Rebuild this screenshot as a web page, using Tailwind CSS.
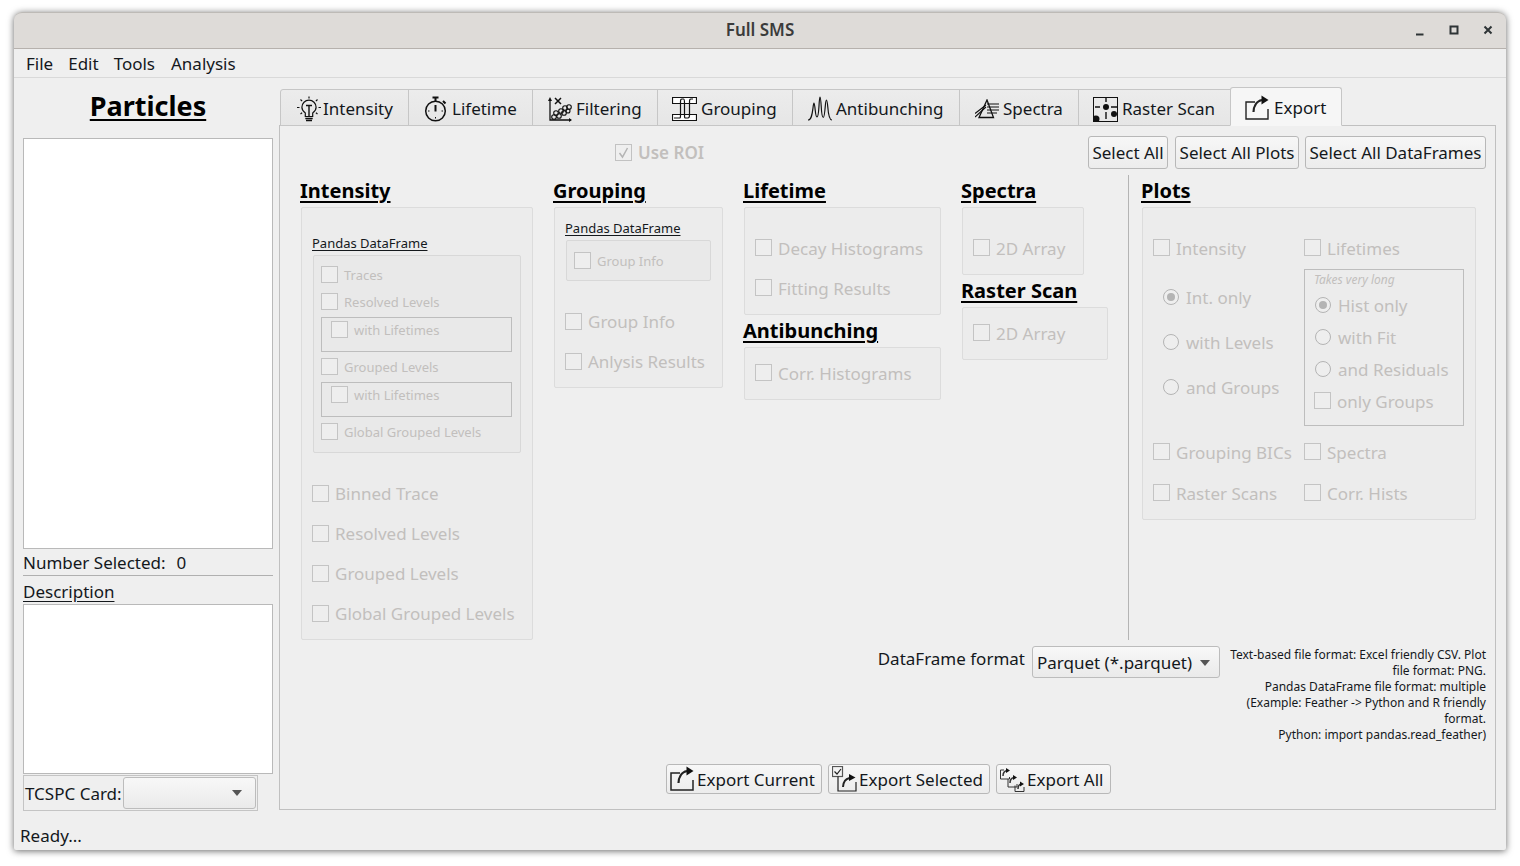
<!DOCTYPE html>
<html lang="en">
<head>
  <meta charset="UTF-8"/>
  <title>Full SMS</title>
  <script src="https://cdn.jsdelivr.net/npm/@tailwindcss/browser@4"></script>
</head>
<body class="w-[1520px] h-[866px] overflow-hidden bg-white pl-[14px] pt-[12px] font-['Noto_Sans',sans-serif] text-[17px] text-[#14181c]">

<div class="w-[1492px] h-[838px] flex flex-col bg-[#efefef] rounded-t-[8px] rounded-b-[2px] shadow-[0_1px_7px_rgba(0,0,0,0.6)]">

  <!-- title bar -->
  <div class="h-[37px] shrink-0 relative flex items-center justify-center rounded-t-[8px] border-b border-[#b6b1ad] bg-[#dedbd8] border-t border-t-[#bdbab6]">
    <span class="text-[17px] font-semibold text-[#3b3b3b] pb-[2px]">Full SMS</span>
    <div class="absolute right-[12px] top-[11px] flex gap-[22px]">
      <svg width="12" height="12" viewBox="0 0 12 12"><path d="M2 10.500h7.500" stroke="#2e3436" stroke-width="2"/></svg>
      <svg width="12" height="12" viewBox="0 0 12 12"><rect x="2.500" y="2.500" width="7" height="7" fill="none" stroke="#2e3436" stroke-width="2"/></svg>
      <svg width="12" height="12" viewBox="0 0 12 12"><path d="M2.500 2.500l7 7M9.500 2.500l-7 7" stroke="#2e3436" stroke-width="2"/></svg>
    </div>
  </div>

  <!-- menu bar -->
  <div class="h-[29px] shrink-0 flex items-center pl-[12px] pt-[2px] gap-[15px] border-b border-[#d9d9d9]">
    <span>File</span><span>Edit</span><span>Tools</span><span class="ml-[1px]">Analysis</span>
  </div>

  <!-- main area -->
  <div class="flex-1 flex pl-[9px] pr-[10px]">

    <!-- particles column -->
    <div class="w-[250px] shrink-0 flex flex-col">
      <div class="h-[60px] flex items-center justify-center pb-[4px] text-[27px] font-bold text-black underline underline-offset-[3px]">Particles</div>
      <div class="h-[411px] bg-white border border-[#b9b9b9]"></div>
      <div class="h-[27px] flex items-center pt-[2px] border-b border-[#b0b0b0] whitespace-pre"><span>Number Selected:</span><span class="ml-[11px]">0</span></div>
      <div class="h-[28px] flex items-end underline underline-offset-[3px]">Description</div>
      <div class="h-[170px] bg-white border border-[#b9b9b9]"></div>
      <div class="w-[235px] h-[36px] mt-[1px] flex items-center pl-[1px] border border-[#c4c4c4]">
        <span class="pt-[2px]">TCSPC Card:</span>
        <div class="ml-[1px] w-[133px] h-[32px] flex items-center justify-end pr-[13px] rounded-[3px] border border-[#bcbcbc] bg-gradient-to-b from-[#f8f8f8] to-[#eaeaea]">
          <svg width="10" height="6" viewBox="0 0 10 6"><path d="M0 0h10L5 6z" fill="#555"/></svg>
        </div>
      </div>
      <div class="ml-[-3px] mt-[12px] whitespace-nowrap">Ready...</div>
    </div>

    <!-- tabs + panel -->
    <div class="ml-[6px] flex-1 flex flex-col pt-[9px]">
      <div class="h-[39px] flex items-end pl-[1px] relative z-10 -mb-[1px]">
        <div class="w-[129px] h-[37px] flex items-center gap-[2px] pl-[16px] pt-[3px] bg-gradient-to-b from-[#ececec] to-[#e6e6e6] border border-[#c6c6c6] rounded-tl-[3px]">
          <svg width="24" height="26" viewBox="0 0 24 26" fill="none" stroke="#111" stroke-width="1.200">
            <path d="M8.300 17c-2.300-1.600-3.400-3.600-3.400-5.700a7.100 7.100 0 0 1 14.200 0c0 2.100-1.100 4.100-3.400 5.700v3.500H8.300z"/>
            <path d="M9 9.500h6M12 9.500V20.500M8.300 22.500h7.400M9 24.500h6" stroke-width="1.400"/>
            <path d="M12 .5v2M3.500 3.500l1.600 1.600M20.500 3.500l-1.600 1.600M0 11.500h2.500M21.500 11.500H24M3.500 18l1.600-1.300M20.500 18l-1.600-1.300"/>
          </svg>
          <span>Intensity</span>
        </div>
        <div class="w-[125px] h-[37px] -ml-px flex items-center gap-[4px] pl-[15px] pt-[3px] bg-gradient-to-b from-[#ececec] to-[#e6e6e6] border border-[#c6c6c6]">
          <svg width="24" height="26" viewBox="0 0 24 26" fill="none" stroke="#111" stroke-width="1.500">
            <circle cx="11.500" cy="15" r="9.800"/>
            <path d="M8.500 1.500h6M11.500 1.500v3.500M19 5l2.500 2.500" stroke-width="2"/>
            <path d="M11.500 9v6.500" stroke-width="2"/>
            <path d="M4 15h1.500M17.500 15H19M11.500 21v1.500" stroke-width="1"/>
          </svg>
          <span>Lifetime</span>
        </div>
        <div class="w-[126px] h-[37px] -ml-px flex items-center gap-[4px] pl-[15px] pt-[3px] bg-gradient-to-b from-[#ececec] to-[#e6e6e6] border border-[#c6c6c6]">
          <svg width="24" height="26" viewBox="0 0 24 26" fill="none" stroke="#111" stroke-width="1.100">
            <path d="M2 4v20h21" stroke-width="1.300"/>
            <path d="M0 5l2-4 2 4zM21 22l3 2-3 2z" fill="#111" stroke="none"/>
            <path d="M7 2l6 6M13 2L7 8" stroke-width="1.500"/>
            <circle cx="6" cy="21" r="2.300"/><circle cx="8" cy="17" r="2.300"/><circle cx="11" cy="20" r="2.300"/><circle cx="13" cy="15" r="2.300"/><circle cx="16" cy="17" r="2.300"/><circle cx="17" cy="12" r="2.300"/><circle cx="21" cy="11" r="2.300"/><circle cx="20" cy="15" r="2"/>
          </svg>
          <span>Filtering</span>
        </div>
        <div class="w-[136px] h-[37px] -ml-px flex items-center gap-[4px] pl-[14px] pt-[3px] bg-gradient-to-b from-[#ececec] to-[#e6e6e6] border border-[#c6c6c6]">
          <svg width="25" height="24" viewBox="0 0 25 24" fill="none" stroke="#111" stroke-width="1.200">
            <path d="M.5.500h24v6H.5zM.5 17.500h24v6H.5z" fill="#fff"/>
            <path d="M2 21h5c1.500 0 1.500-.5 1.500-3V6c0-3 0-4 1.500-4h1.500v0c1 0 1 1 1 4v12c0 2.500 0 3 1.500 3h2c1.500 0 1.500-1 1.500-3V6c0-3 0-4 1.500-4h2"/>
          </svg>
          <span>Grouping</span>
        </div>
        <div class="w-[168px] h-[37px] -ml-px flex items-center gap-[4px] pl-[15px] pt-[3px] bg-gradient-to-b from-[#ececec] to-[#e6e6e6] border border-[#c6c6c6]">
          <svg width="24" height="26" viewBox="0 0 24 26" fill="none" stroke="#111" stroke-width="1.200">
            <path d="M0 24C3 24 4 20 5 12C5.300 9 5.600 7 6 7C6.400 7 6.800 10 7.200 14C7.600 18 8 21 9 21C10 21 10.500 18 11 10C11.300 4 11.600 1 12 1C12.400 1 12.800 4 13.200 10C13.600 18 14.300 21.500 15.300 21.500C16.300 21.500 16.800 16 17.300 10C17.600 6 18 4 18.500 4C19 4 19.400 7 19.800 11C20.300 18 21 24 24 24"/>
          </svg>
          <span>Antibunching</span>
        </div>
        <div class="w-[120px] h-[37px] -ml-px flex items-center gap-[4px] pl-[15px] pt-[3px] bg-gradient-to-b from-[#ececec] to-[#e6e6e6] border border-[#c6c6c6]">
          <svg width="24" height="20" viewBox="0 0 24 20" fill="none" stroke="#111" stroke-width="1.300">
            <path d="M12 1L4 18.500h14.500z"/>
            <path d="M0 14.500L11 6M0 18l11-10M12 5h12M12 8h12M12 11h12M12 14h10" stroke-width="1.100"/>
          </svg>
          <span>Spectra</span>
        </div>
        <div class="w-[153px] h-[37px] -ml-px flex items-center gap-[4px] pl-[14px] pt-[3px] bg-gradient-to-b from-[#ececec] to-[#e6e6e6] border border-[#c6c6c6]">
          <svg width="25" height="25" viewBox="0 0 25 25" fill="#111">
            <rect x=".5" y=".5" width="24" height="24" fill="none" stroke="#111"/>
            <circle cx="13" cy="10" r="3"/><circle cx="21" cy="17" r="3"/><circle cx="3" cy="22" r="3.500"/>
            <path d="M12.300 1h1.400v4h-1.400zM12.300 15h1.400v7h-1.400zM2 9.300h5v1.400H2zM18 9.300h6v1.400h-6z"/>
          </svg>
          <span>Raster Scan</span>
        </div>
        <div class="w-[112px] h-[39px] -ml-px flex items-center gap-[5px] pl-[14px] pt-[3px] bg-[#f6f6f6] border border-[#c6c6c6] border-b-[#f6f6f6] rounded-t-[3px]">
          <svg width="24" height="26" viewBox="0 0 24 26" fill="none" stroke="#222" stroke-width="1.400">
            <path d="M10 7H1v17h22v-10"/>
            <path d="M8.500 17c.2-5 2.500-11 8.500-12" stroke-width="2.200"/>
            <path d="M16.500 .5l7 4.500-7 4.500z" fill="#111" stroke="none"/>
          </svg>
          <span>Export</span>
        </div>
      </div>

      <!-- export page -->
      <div class="w-[1217px] h-[685px] shrink-0 border border-[#c0c0c0] bg-[#efefef] flex flex-col">

        <!-- top row -->
        <div class="h-[49px] flex items-start pt-[10px] pr-[9px]">
          <div class="ml-[335px] mt-[4px] flex items-center gap-[6px] text-[#c2bfbd] font-semibold">
            <span class="w-[17px] h-[17px] border border-[#c2c2c2] flex items-center justify-center">
              <svg width="13" height="13" viewBox="0 0 13 13" fill="none"><path d="M2.500 7l3 4 5-9" stroke="#b4b4b4" stroke-width="1.500"/></svg>
            </span>
            <span>Use ROI</span>
          </div>
          <div class="ml-auto flex">
            <div class="w-[80px] h-[33px] flex items-center justify-center rounded-[3px] border border-[#b8b8b8] bg-gradient-to-b from-[#f7f7f7] to-[#ececec]">Select All</div>
            <div class="w-[124px] h-[33px] ml-[7px] flex items-center justify-center rounded-[3px] border border-[#b8b8b8] bg-gradient-to-b from-[#f7f7f7] to-[#ececec]">Select All Plots</div>
            <div class="w-[181px] h-[33px] ml-[6px] flex items-center justify-center rounded-[3px] border border-[#b8b8b8] bg-gradient-to-b from-[#f7f7f7] to-[#ececec]">Select All DataFrames</div>
          </div>
        </div>

        <!-- columns -->
        <div class="h-[465px] flex pl-[20px] text-[#c2bfbd]">

          <!-- intensity -->
          <div class="w-[253px] shrink-0">
            <div class="h-[32px] flex items-center text-[20px] font-bold text-black underline underline-offset-[3px]">Intensity</div>
            <div class="ml-[1px] w-[232px] h-[433px] pl-[10px] border border-[#dcdcdc] rounded-[2px] bg-[#ececec]">
              <div class="h-[47px] flex items-end text-[13px] text-[#14181c] underline underline-offset-[2px] pb-[2px]">Pandas DataFrame</div>
              <div class="ml-[1px] w-[208px] h-[198px] pl-[7px] pt-[10px] border border-[#d8d8d8] rounded-[2px] bg-[#e9e9e9] text-[13px]">
                <div class="h-[17px] flex items-center gap-[6px]"><span class="w-[17px] h-[17px] border border-[#c4c4c4] bg-[#eeeeee]"></span><span class="pt-[2px]">Traces</span></div>
                <div class="h-[17px] mt-[10px] flex items-center gap-[6px]"><span class="w-[17px] h-[17px] border border-[#c4c4c4] bg-[#eeeeee]"></span><span class="pt-[2px]">Resolved Levels</span></div>
                <div class="w-[191px] h-[35px] mt-[7px] pl-[9px] pt-[3px] border border-[#bdbdbd]">
                  <div class="h-[17px] flex items-center gap-[6px]"><span class="w-[17px] h-[17px] border border-[#c4c4c4] bg-[#eeeeee]"></span><span class="pt-[2px]">with Lifetimes</span></div>
                </div>
                <div class="h-[17px] mt-[6px] flex items-center gap-[6px]"><span class="w-[17px] h-[17px] border border-[#c4c4c4] bg-[#eeeeee]"></span><span class="pt-[2px]">Grouped Levels</span></div>
                <div class="w-[191px] h-[35px] mt-[7px] pl-[9px] pt-[3px] border border-[#bdbdbd]">
                  <div class="h-[17px] flex items-center gap-[6px]"><span class="w-[17px] h-[17px] border border-[#c4c4c4] bg-[#eeeeee]"></span><span class="pt-[2px]">with Lifetimes</span></div>
                </div>
                <div class="h-[17px] mt-[6px] flex items-center gap-[6px]"><span class="w-[17px] h-[17px] border border-[#c4c4c4] bg-[#eeeeee]"></span><span class="pt-[2px]">Global Grouped Levels</span></div>
              </div>
              <div class="h-[17px] mt-[32px] flex items-center gap-[6px]"><span class="w-[17px] h-[17px] border border-[#c4c4c4] bg-[#eeeeee]"></span><span>Binned Trace</span></div>
              <div class="h-[17px] mt-[23px] flex items-center gap-[6px]"><span class="w-[17px] h-[17px] border border-[#c4c4c4] bg-[#eeeeee]"></span><span>Resolved Levels</span></div>
              <div class="h-[17px] mt-[23px] flex items-center gap-[6px]"><span class="w-[17px] h-[17px] border border-[#c4c4c4] bg-[#eeeeee]"></span><span>Grouped Levels</span></div>
              <div class="h-[17px] mt-[23px] flex items-center gap-[6px]"><span class="w-[17px] h-[17px] border border-[#c4c4c4] bg-[#eeeeee]"></span><span>Global Grouped Levels</span></div>
            </div>
          </div>

          <!-- grouping -->
          <div class="w-[190px] shrink-0">
            <div class="h-[32px] flex items-center text-[20px] font-bold text-black underline underline-offset-[3px]">Grouping</div>
            <div class="ml-[1px] w-[169px] h-[181px] pl-[10px] border border-[#dcdcdc] rounded-[2px] bg-[#ececec]">
              <div class="h-[32px] flex items-end text-[13px] text-[#14181c] underline underline-offset-[2px] pb-[2px]">Pandas DataFrame</div>
              <div class="ml-[1px] w-[145px] h-[41px] pl-[7px] pt-[11px] border border-[#d8d8d8] rounded-[2px] bg-[#e9e9e9] text-[13px]">
                <div class="h-[17px] flex items-center gap-[6px]"><span class="w-[17px] h-[17px] border border-[#c4c4c4] bg-[#eeeeee]"></span><span class="pt-[2px]">Group Info</span></div>
              </div>
              <div class="h-[17px] mt-[32px] flex items-center gap-[6px]"><span class="w-[17px] h-[17px] border border-[#c4c4c4] bg-[#eeeeee]"></span><span>Group Info</span></div>
              <div class="h-[17px] mt-[23px] flex items-center gap-[6px]"><span class="w-[17px] h-[17px] border border-[#c4c4c4] bg-[#eeeeee]"></span><span>Anlysis Results</span></div>
            </div>
          </div>

          <!-- lifetime + antibunching -->
          <div class="w-[218px] shrink-0">
            <div class="h-[32px] flex items-center text-[20px] font-bold text-black underline underline-offset-[3px]">Lifetime</div>
            <div class="ml-[1px] w-[197px] h-[108px] pl-[10px] pt-[31px] border border-[#dcdcdc] rounded-[2px] bg-[#ececec]">
              <div class="h-[17px] flex items-center gap-[6px]"><span class="w-[17px] h-[17px] border border-[#c4c4c4] bg-[#eeeeee]"></span><span class="pt-[2px]">Decay Histograms</span></div>
              <div class="h-[17px] mt-[23px] flex items-center gap-[6px]"><span class="w-[17px] h-[17px] border border-[#c4c4c4] bg-[#eeeeee]"></span><span class="pt-[2px]">Fitting Results</span></div>
            </div>
            <div class="h-[32px] flex items-center text-[20px] font-bold text-black underline underline-offset-[3px]">Antibunching</div>
            <div class="ml-[1px] w-[197px] h-[53px] pl-[10px] pt-[16px] border border-[#dcdcdc] rounded-[2px] bg-[#ececec]">
              <div class="h-[17px] flex items-center gap-[6px]"><span class="w-[17px] h-[17px] border border-[#c4c4c4] bg-[#eeeeee]"></span><span class="pt-[2px]">Corr. Histograms</span></div>
            </div>
          </div>

          <!-- spectra + raster scan -->
          <div class="w-[167px] shrink-0">
            <div class="h-[32px] flex items-center text-[20px] font-bold text-black underline underline-offset-[3px]">Spectra</div>
            <div class="ml-[1px] w-[122px] h-[68px] pl-[10px] pt-[31px] border border-[#dcdcdc] rounded-[2px] bg-[#ececec]">
              <div class="h-[17px] flex items-center gap-[6px]"><span class="w-[17px] h-[17px] border border-[#c4c4c4] bg-[#eeeeee]"></span><span class="pt-[2px]">2D Array</span></div>
            </div>
            <div class="h-[32px] flex items-center text-[20px] font-bold text-black underline underline-offset-[3px]">Raster Scan</div>
            <div class="ml-[1px] w-[146px] h-[53px] pl-[10px] pt-[16px] border border-[#dcdcdc] rounded-[2px] bg-[#ececec]">
              <div class="h-[17px] flex items-center gap-[6px]"><span class="w-[17px] h-[17px] border border-[#c4c4c4] bg-[#eeeeee]"></span><span class="pt-[2px]">2D Array</span></div>
            </div>
          </div>

          <div class="w-px h-[465px] bg-[#b4b4b4] shrink-0"></div>

          <!-- plots -->
          <div class="ml-[12px] shrink-0">
            <div class="h-[32px] flex items-center text-[20px] font-bold text-black underline underline-offset-[3px]">Plots</div>
            <div class="ml-[1px] w-[334px] h-[313px] flex pl-[10px] pt-[31px] border border-[#dcdcdc] rounded-[2px] bg-[#ececec]">
              <div class="w-[151px] shrink-0">
                <div class="h-[17px] flex items-center gap-[6px]"><span class="w-[17px] h-[17px] border border-[#c4c4c4] bg-[#eeeeee]"></span><span class="pt-[2px]">Intensity</span></div>
                <div class="h-[16px] mt-[33px] ml-[10px] flex items-center gap-[7px]"><span class="w-[16px] h-[16px] rounded-full border border-[#b4b4b4] bg-[#eeeeee] flex items-center justify-center"><span class="w-[8px] h-[8px] rounded-full bg-[#b4b4b4]"></span></span><span class="pt-[2px]">Int. only</span></div>
                <div class="h-[16px] mt-[29px] ml-[10px] flex items-center gap-[7px]"><span class="w-[16px] h-[16px] rounded-full border border-[#b4b4b4] bg-[#eeeeee]"></span><span class="pt-[2px]">with Levels</span></div>
                <div class="h-[16px] mt-[29px] ml-[10px] flex items-center gap-[7px]"><span class="w-[16px] h-[16px] rounded-full border border-[#b4b4b4] bg-[#eeeeee]"></span><span class="pt-[2px]">and Groups</span></div>
                <div class="h-[17px] mt-[48px] flex items-center gap-[6px] whitespace-nowrap"><span class="w-[17px] h-[17px] border border-[#c4c4c4] bg-[#eeeeee]"></span><span class="pt-[2px]">Grouping BICs</span></div>
                <div class="h-[17px] mt-[24px] flex items-center gap-[6px]"><span class="w-[17px] h-[17px] border border-[#c4c4c4] bg-[#eeeeee]"></span><span class="pt-[2px]">Raster Scans</span></div>
              </div>
              <div class="shrink-0">
                <div class="h-[17px] flex items-center gap-[6px]"><span class="w-[17px] h-[17px] border border-[#c4c4c4] bg-[#eeeeee]"></span><span class="pt-[2px]">Lifetimes</span></div>
                <div class="w-[160px] h-[157px] mt-[13px] pl-[10px] border border-[#bdbdbd]">
                  <div class="h-[19px] -ml-px flex items-end text-[12px] italic">Takes very long</div>
                  <div class="h-[16px] mt-[8px] flex items-center gap-[7px]"><span class="w-[16px] h-[16px] rounded-full border border-[#b4b4b4] bg-[#eeeeee] flex items-center justify-center"><span class="w-[8px] h-[8px] rounded-full bg-[#b4b4b4]"></span></span><span class="pt-[2px]">Hist only</span></div>
                  <div class="h-[16px] mt-[16px] flex items-center gap-[7px]"><span class="w-[16px] h-[16px] rounded-full border border-[#b4b4b4] bg-[#eeeeee]"></span><span class="pt-[2px]">with Fit</span></div>
                  <div class="h-[16px] mt-[16px] flex items-center gap-[7px]"><span class="w-[16px] h-[16px] rounded-full border border-[#b4b4b4] bg-[#eeeeee]"></span><span class="pt-[2px]">and Residuals</span></div>
                  <div class="h-[17px] mt-[15px] -ml-px flex items-center gap-[6px]"><span class="w-[17px] h-[17px] border border-[#c4c4c4] bg-[#eeeeee]"></span><span class="pt-[2px]">only Groups</span></div>
                </div>
                <div class="h-[17px] mt-[17px] flex items-center gap-[6px]"><span class="w-[17px] h-[17px] border border-[#c4c4c4] bg-[#eeeeee]"></span><span class="pt-[2px]">Spectra</span></div>
                <div class="h-[17px] mt-[24px] flex items-center gap-[6px]"><span class="w-[17px] h-[17px] border border-[#c4c4c4] bg-[#eeeeee]"></span><span class="pt-[2px]">Corr. Hists</span></div>
              </div>
            </div>
          </div>
        </div>

        <!-- format row -->
        <div class="h-[118px] mt-[6px] flex justify-end items-start pr-[9px]">
          <div>DataFrame format</div>
          <div class="ml-[7px] w-[188px] h-[32px] flex items-center justify-between pl-[4px] pr-[9px] pt-[2px] rounded-[3px] border border-[#bcbcbc] bg-gradient-to-b from-[#f8f8f8] to-[#eaeaea]">
            <span>Parquet (*.parquet)</span>
            <svg width="10" height="6" viewBox="0 0 10 6"><path d="M0 0h10L5 6z" fill="#555"/></svg>
          </div>
          <div class="ml-[10px] mt-[1px] w-[256px] text-right text-[12px] leading-[16px] whitespace-nowrap flex flex-col items-end">
            <span>Text-based file format: Excel friendly CSV. Plot</span>
            <span>file format: PNG.</span>
            <span>Pandas DataFrame file format: multiple</span>
            <span>(Example: Feather -&gt; Python and R friendly</span>
            <span>format.</span>
            <span>Python: import pandas.read_feather)</span>
          </div>
        </div>

        <!-- export buttons -->
        <div class="flex gap-[6px] pl-[386px]">
          <div class="w-[156px] h-[30px] flex items-center gap-[3px] pl-[3px] rounded-[3px] border border-[#b8b8b8] bg-gradient-to-b from-[#f7f7f7] to-[#ececec]">
            <svg width="24" height="26" viewBox="0 0 24 26" fill="none" stroke="#222" stroke-width="1.500">
              <path d="M10 7H1v17h22v-10"/>
              <path d="M8.500 17c.2-5 2.500-11 8.500-12" stroke-width="2.200"/>
              <path d="M16.500 .5l7 4.500-7 4.500z" fill="#111" stroke="none"/>
            </svg>
            <span class="pt-[2px]">Export Current</span>
          </div>
          <div class="w-[162px] h-[30px] flex items-center gap-[2px] pl-[3px] rounded-[3px] border border-[#b8b8b8] bg-gradient-to-b from-[#f7f7f7] to-[#ececec]">
            <svg width="25" height="26" viewBox="0 0 25 26" fill="none" stroke="#222" stroke-width="1.200">
              <rect x=".5" y=".5" width="10" height="10" fill="#f3f3f3" stroke="#555"/>
              <path d="M2.500 5.500l2.500 2.500 4-5" stroke-width="1.200"/>
              <path d="M6 10.500v14.500h18V16"/>
              <path d="M11 21c.2-4.500 2-8 6.500-9" stroke-width="2"/>
              <path d="M17 8l6.500 3.500-6.500 3.500z" fill="#111" stroke="none"/>
            </svg>
            <span class="pt-[2px]">Export Selected</span>
          </div>
          <div class="w-[115px] h-[30px] flex items-center gap-[2px] pl-[3px] rounded-[3px] border border-[#b8b8b8] bg-gradient-to-b from-[#f7f7f7] to-[#ececec]">
            <svg width="25" height="26" viewBox="0 0 25 26" fill="none" stroke="#333" stroke-width="1">
              <path d="M4 4H.5v9h9v-2M8 13v8h9v-3M15 19.500v6h9V21"/>
              <path d="M3 10c0-3 1.500-5 4-5.500M10 17c0-3 1.500-5 4-5.500M18 23c0-3 1-4.500 3-5" stroke-width="1.500"/>
              <path d="M6 2l4 2.500L6 7zM13 9l4 2.500L13 14zM20 15.500l4 2.500-4 2.500z" fill="#111" stroke="none"/>
            </svg>
            <span class="pt-[2px]">Export All</span>
          </div>
        </div>
      </div>
    </div>
  </div>
</div>
</body>
</html>
